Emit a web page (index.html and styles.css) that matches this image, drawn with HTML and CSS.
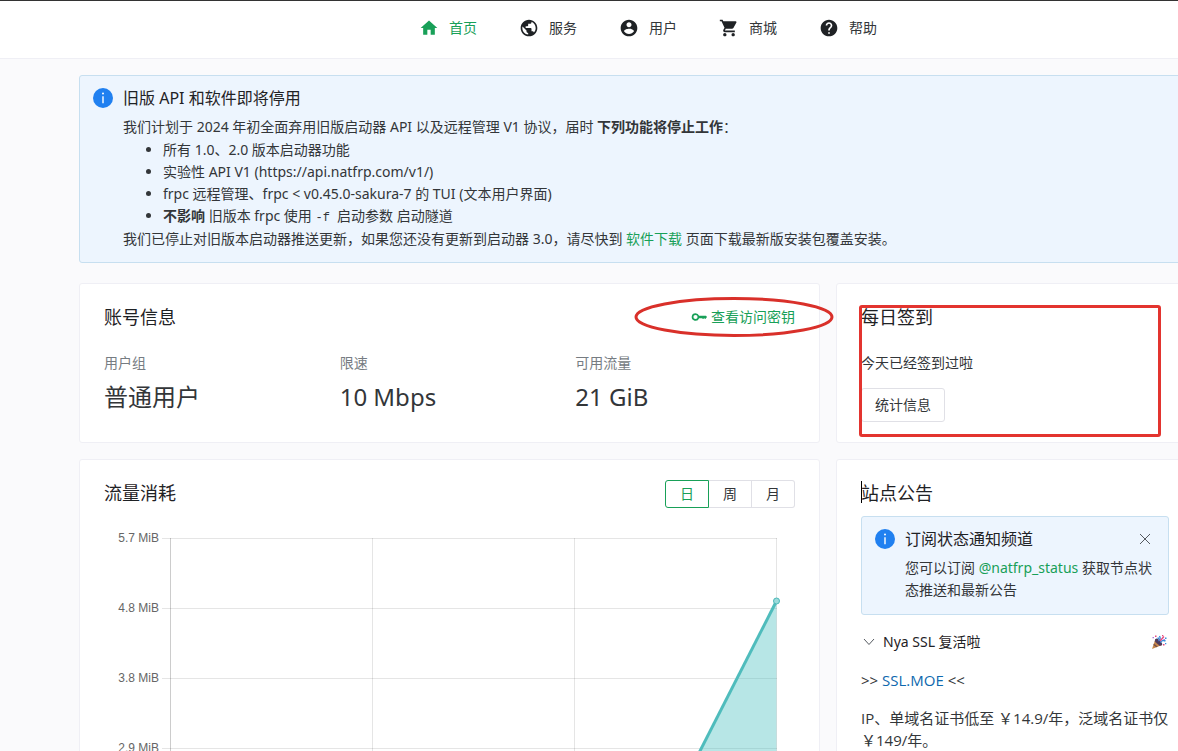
FILE: index.html
```html
<!DOCTYPE html>
<html lang="zh-CN">
<head>
<meta charset="utf-8">
<meta name="viewport" content="width=device-width, initial-scale=1">
<title>首页</title>
<link rel="stylesheet" href="styles.css">
</head>
<body>
<header class="topbar">
  <nav class="nav">
    <a class="nav-item active" href="#"><svg viewBox="0 0 24 24"><path d="M10 20v-6h4v6h5v-8h3L12 3 2 12h3v8z"/></svg>首页</a>
    <a class="nav-item" href="#"><svg viewBox="0 0 24 24"><path d="M12 2C6.48 2 2 6.48 2 12s4.48 10 10 10 10-4.48 10-10S17.52 2 12 2zm-1 17.93c-3.95-.49-7-3.85-7-7.93 0-.62.08-1.21.21-1.79L9 15v1c0 1.1.9 2 2 2v1.93zm6.9-2.54c-.26-.81-1-1.39-1.9-1.39h-1v-3c0-.55-.45-1-1-1H8v-2h2c.55 0 1-.45 1-1V7h2c1.1 0 2-.9 2-2v-.41c2.93 1.19 5 4.06 5 7.41 0 2.08-.8 3.97-2.1 5.39z"/></svg>服务</a>
    <a class="nav-item" href="#"><svg viewBox="0 0 24 24"><path d="M12 2C6.48 2 2 6.48 2 12s4.48 10 10 10 10-4.48 10-10S17.52 2 12 2zm0 3c1.66 0 3 1.34 3 3s-1.34 3-3 3-3-1.34-3-3 1.34-3 3-3zm0 14.2c-2.5 0-4.71-1.28-6-3.22.03-1.99 4-3.08 6-3.08 1.99 0 5.97 1.09 6 3.08-1.29 1.94-3.5 3.22-6 3.22z"/></svg>用户</a>
    <a class="nav-item" href="#"><svg viewBox="0 0 24 24"><path d="M7 18c-1.1 0-1.99.9-1.99 2S5.9 22 7 22s2-.9 2-2-.9-2-2-2zM1 2v2h2l3.6 7.59-1.35 2.45c-.16.28-.25.61-.25.96 0 1.1.9 2 2 2h12v-2H7.42c-.14 0-.25-.11-.25-.25l.03-.12.9-1.63h7.45c.75 0 1.41-.41 1.75-1.03l3.58-6.49c.08-.14.12-.31.12-.48 0-.55-.45-1-1-1H5.21l-.94-2H1zm16 16c-1.1 0-1.99.9-1.99 2s.89 2 1.99 2 2-.9 2-2-.9-2-2-2z"/></svg>商城</a>
    <a class="nav-item" href="#"><svg viewBox="0 0 24 24"><path d="M12 2C6.48 2 2 6.48 2 12s4.48 10 10 10 10-4.48 10-10S17.52 2 12 2zm1 17h-2v-2h2v2zm2.07-7.75l-.9.92C13.45 12.9 13 13.5 13 15h-2v-.5c0-1.1.45-2.1 1.17-2.83l1.24-1.26c.37-.36.59-.86.59-1.41 0-1.1-.9-2-2-2s-2 .9-2 2H8c0-2.21 1.79-4 4-4s4 1.79 4 4c0 .88-.36 1.68-.93 2.25z"/></svg>帮助</a>
  </nav>
</header>

<main class="content">
  <section class="alert alert-wide">
    <svg class="info" viewBox="0 0 20 20"><circle cx="10" cy="10" r="10"/><path d="M9.3 8.2h1.4v7H9.3zM10 4.6a1 1 0 1 1 0 2 1 1 0 0 1 0-2z" fill="#fff"/></svg>
    <div class="alert-body">
      <h2 class="alert-title">旧版 API 和软件即将停用</h2>
      <p>我们计划于 2024 年初全面弃用旧版启动器 API 以及远程管理 V1 协议，届时 <b>下列功能将停止工作</b>：</p>
      <ul>
        <li>所有 1.0、2.0 版本启动器功能</li>
        <li>实验性 API V1 (https://api.natfrp.com/v1/)</li>
        <li>frpc 远程管理、frpc &lt; v0.45.0-sakura-7 的 TUI (文本用户界面)</li>
        <li><b>不影响</b> 旧版本 frpc 使用 <code><span class="flag">-f </span>启动参数</code> 启动隧道</li>
      </ul>
      <p>我们已停止对旧版本启动器推送更新，如果您还没有更新到启动器 3.0，请尽快到 <a href="#">软件下载</a> 页面下载最新版安装包覆盖安装。</p>
    </div>
  </section>

  <div class="grid">
    <section class="card account">
      <div class="card-head">
        <h2>账号信息</h2>
        <button class="key-button" type="button"><svg viewBox="0 0 16 16"><path fill-rule="evenodd" d="M4.5 4.2a3.8 3.8 0 0 1 3.6 2.5H15L16 8l-1.6 2-1.2-.8-1.1.8-1.2-.8H8.1A3.8 3.8 0 1 1 4.5 4.2zm0 1.7a2.1 2.1 0 1 0 0 4.2 2.1 2.1 0 0 0 0-4.2z"/></svg>查看访问密钥</button>
      </div>
      <dl class="stats">
        <div><dt>用户组</dt><dd>普通用户</dd></div>
        <div><dt>限速</dt><dd>10 Mbps</dd></div>
        <div><dt>可用流量</dt><dd>21 GiB</dd></div>
      </dl>
      <svg class="mark-ellipse" viewBox="0 0 200 40"><ellipse cx="100" cy="20" rx="98" ry="18.5"/></svg>
    </section>

    <section class="card signin">
      <div class="card-head"><h2>每日签到</h2></div>
      <p class="signed">今天已经签到过啦</p>
      <button class="button" type="button">统计信息</button>
      <div class="mark-box"></div>
    </section>

    <section class="card traffic">
      <div class="card-head">
        <h2>流量消耗</h2>
        <div class="segments">
          <button class="segment selected" type="button">日</button>
          <button class="segment" type="button">周</button>
          <button class="segment" type="button">月</button>
        </div>
      </div>
      <svg class="chart" viewBox="0 0 691 240">
        <path class="gridline" d="M58 18.5H673M58 88.5H673M58 158.5H673M58 228.5H673M268.5 18V240M470.5 18V240M672.5 18V240"/>
        <path class="axis" d="M66.5 18V240"/>
        <path class="area" d="M672.5 81L591.4 240H672.5Z"/>
        <path class="line" d="M672.5 81L591.4 240"/>
        <circle class="point" cx="672.5" cy="81" r="3"/>
        <g class="labels">
          <text x="55" y="22">5.7 MiB</text>
          <text x="55" y="92">4.8 MiB</text>
          <text x="55" y="162">3.8 MiB</text>
          <text x="55" y="232">2.9 MiB</text>
        </g>
      </svg>
    </section>

    <section class="card news">
      <div class="card-head"><h2 class="with-caret">站点公告</h2></div>
      <div class="alert">
        <svg class="info" viewBox="0 0 20 20"><circle cx="10" cy="10" r="10"/><path d="M9.3 8.2h1.4v7H9.3zM10 4.6a1 1 0 1 1 0 2 1 1 0 0 1 0-2z" fill="#fff"/></svg>
        <div class="alert-body">
          <h3 class="alert-title">订阅状态通知频道</h3>
          <p>您可以订阅 <a href="#">@natfrp_status</a> 获取节点状态推送和最新公告</p>
        </div>
        <button class="close" type="button" aria-label="关闭"><svg viewBox="0 0 12 12"><path d="M1 1l10 10M11 1L1 11"/></svg></button>
      </div>
      <button class="fold" type="button">
        <svg class="chevron" viewBox="0 0 12 12"><path d="M1 3l5 5.5L11 3"/></svg>
        <span>Nya SSL 复活啦</span>
        <svg class="party" viewBox="0 0 16 16">
          <path d="M4.5 5L1 15l10-4z" fill="#c98a4b"/>
          <path d="M4.5 5L3.6 7.6l5 4.3L11 11z" fill="#6b4a58"/>
          <path d="M3 9.5l3.8 3.2-1.6.6-2.9-2.2z" fill="#7a5148"/>
          <ellipse cx="7.7" cy="8" rx="1.9" ry="4.4" transform="rotate(-46 7.7 8)" fill="#4b3b60"/>
          <path d="M7.5 7c1.5-1 2-3 1-5M9.5 8.5c1-2 3-2.5 5-1.5" stroke="#3c8ddb" stroke-width="1.4" fill="none"/>
          <path d="M9 7l4-4.5" stroke="#e5487d" stroke-width="1.4"/>
          <path d="M4 1.5h1.5V3H4zM12 10h1.5v1.5H12zM11 1h1.3v1.3H11z" fill="#e5487d"/>
          <path d="M14 3.5h1.5V5H14zM6.5 3.5H8V5H6.5zM14 9h1.3v1.3H14z" fill="#3c8ddb"/>
          <path d="M1.5 3H3v1.3H1.5zM12.5 5H14v1h-1.5z" fill="#b675d8"/>
        </svg>
      </button>
      <p class="promo">&gt;&gt; <a href="#">SSL.MOE</a> &lt;&lt;</p>
      <p class="promo">IP、单域名证书低至 ￥14.9/年，泛域名证书仅 ￥149/年。</p>
    </section>
  </div>
</main>
</body>
</html>
```

FILE: styles.css
```css
* { box-sizing: border-box; }
html { overflow-x: hidden; scrollbar-width: none; }
body {
  margin: 0;
  overflow: hidden;
  height: 100vh;
  background: #fafafc;
  color: #333639;
  font: 14px/22px "Noto Sans", "Noto Sans CJK SC", sans-serif;
}
h2, h3, p, ul, dl, dd { margin: 0; }
button { font: inherit; color: inherit; background: none; border: 0; padding: 0; }
a { color: #18a058; text-decoration: none; }

.topbar {
  border-top: 1px solid #333;
  border-bottom: 1px solid #efeff5;
  background: #fff;
  padding: 16px 0 19px 118px;
}
.nav { display: flex; justify-content: center; gap: 42px; }
.nav-item { display: flex; align-items: center; gap: 10px; color: #333639; }
.nav-item svg { width: 20px; height: 20px; fill: #1f2225; }
.nav-item.active { color: #18a058; }
.nav-item.active svg { fill: #18a058; }

.content { margin: 16px -16px 0 79px; }

.alert {
  position: relative;
  display: flex;
  gap: 10px;
  padding: 12px 13px;
  background: #edf5fe;
  border: 1px solid #c7dff0;
  border-radius: 3px;
}
.info { flex: none; width: 20px; height: 20px; fill: #2080f0; }
.alert-body { flex: 1; }
.alert-title { color: #1f2225; font-size: 16px; font-weight: 400; line-height: 20px; margin-bottom: 8px; }
.alert-wide ul { margin: 1px 0; padding-left: 40px; }
code { font-family: "Liberation Mono", "Noto Sans CJK SC", monospace; font-size: 14px; line-height: 14px; }
.flag { font-size: 12px; }

.grid {
  display: grid;
  grid-template-columns: minmax(0, 1fr) 358px;
  gap: 16px;
  margin-top: 20px;
}
.card {
  position: relative;
  min-width: 0;
  padding: 20px 24px;
  background: #fff;
  border: 1px solid #efeff5;
  border-radius: 3px;
}
.card-head { display: flex; justify-content: space-between; align-items: center; height: 28px; }
.card-head h2 { padding-bottom: 2px; color: #1f2225; font-size: 18px; font-weight: 400; line-height: 26px; }
.key-button { display: flex; align-items: center; gap: 4px; padding-bottom: 2px; color: #18a058; }
.key-button svg { width: 16px; height: 16px; fill: #18a058; }

.stats { display: grid; grid-template-columns: repeat(3, 1fr); column-gap: 16px; margin-top: 20px; }
.stats dt { color: #767c82; }
.stats dd { font-size: 24px; line-height: 36px; margin-top: 5px; }
.account, .signin { padding-bottom: 20px; }

.mark-ellipse { position: absolute; top: 13px; right: -15px; width: 200px; height: 40px; }
.mark-ellipse ellipse { fill: none; stroke: #d9302a; stroke-width: 3; }
.mark-box { position: absolute; inset: 21px 32px 5px 22px; border: 3px solid #e3342f; border-radius: 3px; }

.signed { margin-top: 20px; }
.button {
  height: 34px;
  margin-top: 14px;
  padding: 0 13px;
  border: 1px solid #e0e0e6;
  border-radius: 3px;
}

.traffic .card-head { margin-bottom: 12px; }
.segments { display: flex; }
.segment { width: 43px; height: 28px; border: 1px solid #e0e0e6; border-left-width: 0; }
.segment:last-child { border-radius: 0 3px 3px 0; }
.segment.selected { width: 44px; color: #18a058; border: 1px solid #18a058; border-radius: 3px 0 0 3px; }

.chart { display: block; width: 100%; height: auto; }
.gridline { stroke: rgba(0, 0, 0, 0.1); fill: none; }
.axis { stroke: rgba(0, 0, 0, 0.2); }
.area { fill: rgba(75, 192, 192, 0.4); }
.line { stroke: #4fbcbc; stroke-width: 3; }
.point { fill: #9bdada; stroke: #4bb8b8; }
.labels { fill: #666; font: 12px "Liberation Sans", sans-serif; text-anchor: end; }

.with-caret { position: relative; }
.with-caret::before { content: ""; position: absolute; left: 0; top: 1px; width: 1px; height: 22px; background: #000; }
.news .alert { margin-top: 8px; padding-bottom: 13px; }
.close { position: absolute; top: 16px; right: 17px; width: 12px; height: 12px; }
.close svg, .chevron { display: block; width: 12px; height: 12px; fill: none; stroke: #555a60; }
.fold { display: flex; align-items: center; gap: 8px; width: 100%; margin-top: 16px; padding: 0 2px; color: #1f2225; }
.party { width: 16px; height: 16px; margin-left: auto; }
.promo { margin: 16px -4px 0 0; font-family: "Open Sans", "Noto Sans CJK SC", sans-serif; font-size: 15px; }
.promo a { color: #0e68ae; }
```
